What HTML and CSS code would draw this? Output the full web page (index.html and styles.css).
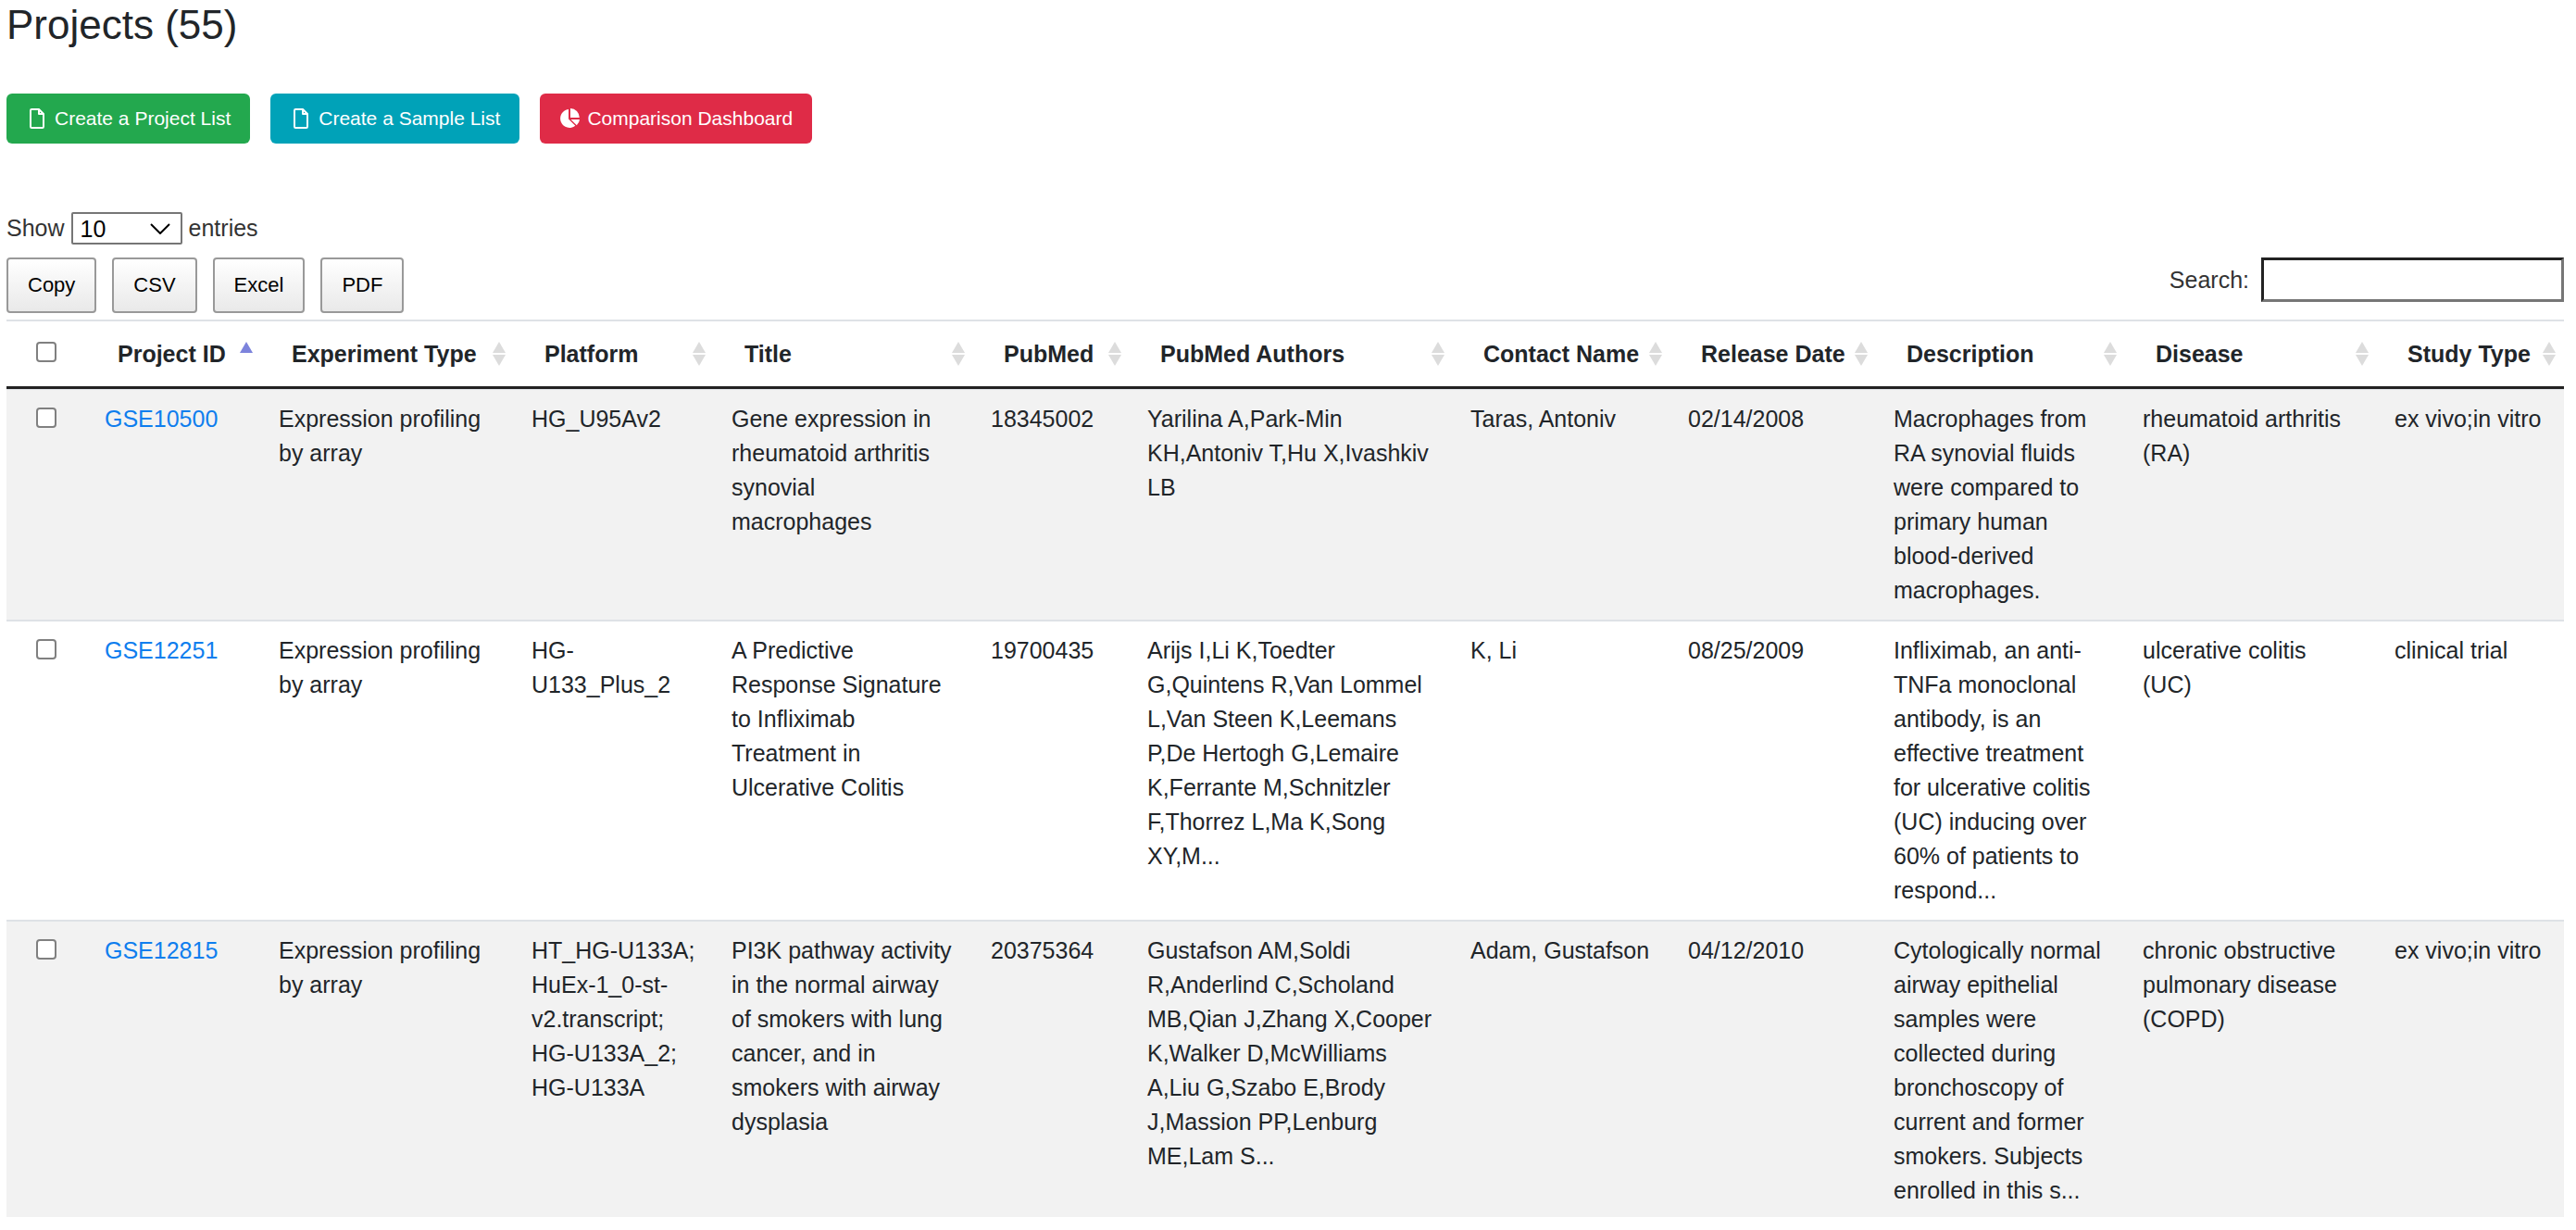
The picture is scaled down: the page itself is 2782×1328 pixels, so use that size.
FILE: index.html
```html
<!DOCTYPE html>
<html lang="en">
<head>
<meta charset="utf-8">
<title>Projects</title>
<link rel="stylesheet" href="styles.css">
</head>
<body>
<main class="page">
  <h1 class="page-title">Projects (55)</h1>

  <div class="actions">
    <button type="button" class="btn btn-success">
      <svg class="icon-file" viewBox="0 0 16 22" aria-hidden="true"><path d="M1 2.2Q1 1 2.2 1H10l5 5v13.800Q15 21 13.800 21H2.200Q1 21 1 19.800ZM10 1v5h5" fill="none" stroke="currentColor" stroke-width="2" stroke-linejoin="round"/></svg>
      Create a Project List
    </button>
    <button type="button" class="btn btn-info">
      <svg class="icon-file" viewBox="0 0 16 22" aria-hidden="true"><path d="M1 2.2Q1 1 2.2 1H10l5 5v13.800Q15 21 13.800 21H2.200Q1 21 1 19.800ZM10 1v5h5" fill="none" stroke="currentColor" stroke-width="2" stroke-linejoin="round"/></svg>
      Create a Sample List
    </button>
    <button type="button" class="btn btn-danger">
      <svg class="icon-pie" viewBox="0 0 22 22" aria-hidden="true"><path d="M10 1v10.500l7.300 7.300A10 10 0 1 1 10 1Z" fill="currentColor"/><path d="M12 0a10 10 0 0 1 9.800 10H12Z" fill="currentColor"/><path d="M12.500 12H22a10 10 0 0 1-3.200 6.300Z" fill="currentColor"/></svg>
      Comparison Dashboard
    </button>
  </div>

  <div class="length">
    <label for="page-length">Show</label>
    <span class="select-wrap">
      <select id="page-length" class="length-select">
        <option selected>10</option>
        <option>25</option>
        <option>50</option>
        <option>100</option>
      </select>
      <svg class="chevron" viewBox="0 0 22 12" aria-hidden="true"><path d="M1 1l10 10L21 1" fill="none" stroke="#000" stroke-width="2"/></svg>
    </span>
    <span>entries</span>
  </div>

  <div class="toolbar">
    <div class="exports">
      <button type="button" class="export">Copy</button>
      <button type="button" class="export">CSV</button>
      <button type="button" class="export">Excel</button>
      <button type="button" class="export">PDF</button>
    </div>
    <div class="search">
      <label for="search">Search:</label>
      <input type="search" id="search" class="search-input">
    </div>
  </div>

  <table class="projects">
    <colgroup>
      <col class="c-check"><col class="c-id"><col class="c-exp"><col class="c-platform"><col class="c-title"><col class="c-pubmed"><col class="c-authors"><col class="c-contact"><col class="c-date"><col class="c-desc"><col class="c-disease"><col class="c-study">
    </colgroup>
    <thead>
      <tr>
        <th class="check"><input type="checkbox" class="box" aria-label="Select all"></th>
        <th class="sort asc"><span>Project ID</span></th>
        <th class="sort"><span>Experiment Type</span></th>
        <th class="sort"><span>Platform</span></th>
        <th class="sort"><span>Title</span></th>
        <th class="sort"><span>PubMed</span></th>
        <th class="sort"><span>PubMed Authors</span></th>
        <th class="sort"><span>Contact Name</span></th>
        <th class="sort"><span>Release Date</span></th>
        <th class="sort"><span>Description</span></th>
        <th class="sort"><span>Disease</span></th>
        <th class="sort"><span>Study Type</span></th>
      </tr>
    </thead>
    <tbody>
      <tr>
        <td class="check"><input type="checkbox" class="box" aria-label="Select GSE10500"></td>
        <td><a href="#GSE10500">GSE10500</a></td>
        <td>Expression profiling by array</td>
        <td>HG_U95Av2</td>
        <td class="roomy">Gene expression in rheumatoid arthritis synovial macrophages</td>
        <td>18345002</td>
        <td>Yarilina A,Park-Min KH,Antoniv T,Hu X,Ivashkiv LB</td>
        <td>Taras, Antoniv</td>
        <td>02/14/2008</td>
        <td>Macrophages from RA synovial fluids were compared to primary human blood-derived macrophages.</td>
        <td class="roomy">rheumatoid arthritis (RA)</td>
        <td>ex vivo;in vitro</td>
      </tr>
      <tr>
        <td class="check"><input type="checkbox" class="box" aria-label="Select GSE12251"></td>
        <td><a href="#GSE12251">GSE12251</a></td>
        <td>Expression profiling by array</td>
        <td>HG-U133_Plus_2</td>
        <td class="roomy">A Predictive Response Signature to Infliximab Treatment in Ulcerative Colitis</td>
        <td>19700435</td>
        <td>Arijs I,Li K,Toedter G,Quintens R,Van Lommel L,Van Steen K,Leemans P,De Hertogh G,Lemaire K,Ferrante M,Schnitzler F,Thorrez L,Ma K,Song XY,M...</td>
        <td>K, Li</td>
        <td>08/25/2009</td>
        <td>Infliximab, an anti-TNFa monoclonal antibody, is an effective treatment for ulcerative colitis (UC) inducing over 60% of patients to respond...</td>
        <td class="roomy">ulcerative colitis (UC)</td>
        <td>clinical trial</td>
      </tr>
      <tr>
        <td class="check"><input type="checkbox" class="box" aria-label="Select GSE12815"></td>
        <td><a href="#GSE12815">GSE12815</a></td>
        <td>Expression profiling by array</td>
        <td>HT_HG-U133A; HuEx-1_0-st-v2.transcript; HG-U133A_2; HG-U133A</td>
        <td class="roomy">PI3K pathway activity in the normal airway of smokers with lung cancer, and in smokers with airway dysplasia</td>
        <td>20375364</td>
        <td>Gustafson AM,Soldi R,Anderlind C,Scholand MB,Qian J,Zhang X,Cooper K,Walker D,McWilliams A,Liu G,Szabo E,Brody J,Massion PP,Lenburg ME,Lam S...</td>
        <td>Adam, Gustafson</td>
        <td>04/12/2010</td>
        <td>Cytologically normal airway epithelial samples were collected during bronchoscopy of current and former smokers. Subjects enrolled in this s...</td>
        <td class="roomy">chronic obstructive pulmonary disease (COPD)</td>
        <td>ex vivo;in vitro</td>
      </tr>
    </tbody>
  </table>
</main>
</body>
</html>
```
FILE: styles.css
```css
* { box-sizing: border-box; }

body {
  margin: 0;
  background: #fff;
  color: #212529;
  font: 25px/37px "Liberation Sans", Arial, sans-serif;
}

.page { padding: 0 13px 0 7px; }

.page-title {
  margin: 0 0 48px;
  font-size: 44px;
  font-weight: 400;
  line-height: 53px;
}

button, input, select { font-family: inherit; }

/* main actions */
.actions { display: flex; gap: 22px; margin-bottom: 72px; }

.btn {
  display: flex;
  align-items: center;
  height: 54px;
  padding: 0 21px 0 24px;
  border: 0;
  border-radius: 6px;
  color: #fff;
  font-size: 21px;
}
.btn-success { background: #23a84e; }
.btn-info { background: #00a2b8; }
.btn-danger { background: #df2b47; }

.icon-file { width: 16px; height: 22px; margin: 0 11px 0 1px; }
.icon-pie { width: 22px; height: 22px; margin: 0 8px 0 -3px; }

/* page length */
.length {
  display: flex;
  align-items: center;
  gap: 7px;
  height: 39px;
  margin-bottom: 12px;
  color: #333;
}
.select-wrap { position: relative; display: flex; }
.length-select {
  appearance: none;
  width: 120px;
  height: 35px;
  padding: 0 8px;
  border: 2px solid #767676;
  border-radius: 2px;
  background: #fff;
  color: #000;
  font-size: 25px;
}
.chevron {
  position: absolute;
  right: 13px;
  top: 12px;
  width: 22px;
  height: 12px;
  pointer-events: none;
}

/* export buttons and search */
.toolbar {
  display: flex;
  justify-content: space-between;
  margin-bottom: 7px;
  color: #333;
}
.exports { display: flex; gap: 17px; }
.export {
  height: 60px;
  padding: 0 21px;
  border: 2px solid #999;
  border-radius: 4px;
  background: linear-gradient(#fff, #e9e9e9);
  color: #000;
  font-size: 22px;
}
.search { display: flex; align-items: center; gap: 13px; height: 48px; }
.search-input {
  appearance: none;
  width: 327px;
  height: 48px;
  padding: 0 8px;
  border: 3px solid;
  border-color: #222 #767676 #767676 #222;
  border-radius: 0;
  background: #fff;
  font-size: 25px;
}

/* projects table */
.projects {
  width: 100%;
  table-layout: fixed;
  border-collapse: separate;
  border-spacing: 0;
}
.c-check { width: 92px; }
.c-id { width: 188px; }
.c-exp { width: 273px; }
.c-platform { width: 216px; }
.c-title { width: 280px; }
.c-pubmed { width: 169px; }
.c-authors { width: 349px; }
.c-contact { width: 235px; }
.c-date { width: 222px; }
.c-desc { width: 269px; }
.c-disease { width: 272px; }
.c-study { width: 197px; }

.projects th {
  height: 75px;
  padding: 0 0 0 28px;
  border-top: 2px solid #dee2e6;
  border-bottom: 3px solid #222;
  text-align: left;
  white-space: nowrap;
}
.projects td {
  padding: 13px 14px 13px;
  border-top: 2px solid #dee2e6;
  vertical-align: top;
}
.projects tbody tr:nth-child(odd) { background: #f2f2f2; }
.projects tbody tr:first-child td { border-top-width: 1px; }
.projects tbody tr:last-child td { padding-bottom: 10px; }
.projects .roomy { padding-right: 24px; }
.projects a { color: #0f7eee; text-decoration: none; }

.projects .check { padding-left: 32px; }
.projects th.check { padding-bottom: 4px; }
.box {
  appearance: none;
  display: block;
  width: 22px;
  height: 22px;
  margin: 0;
  border: 2px solid #808080;
  border-radius: 4px;
  background: #fff;
}
td .box { margin-top: 6px; }

/* sort arrows in the header cells */
.sort { position: relative; }
.sort::before,
.sort::after {
  content: "";
  position: absolute;
  right: 14px;
  width: 14px;
  height: 12px;
  background: #dcdcdc;
}
.sort::before { top: 22px; clip-path: polygon(50% 0, 100% 100%, 0 100%); }
.sort::after { top: 36px; clip-path: polygon(0 0, 100% 0, 50% 100%); }
.sort:last-child::before,
.sort:last-child::after { right: 9px; }
.asc::before { background: #7c83dc; }
.asc::after { display: none; }
```
